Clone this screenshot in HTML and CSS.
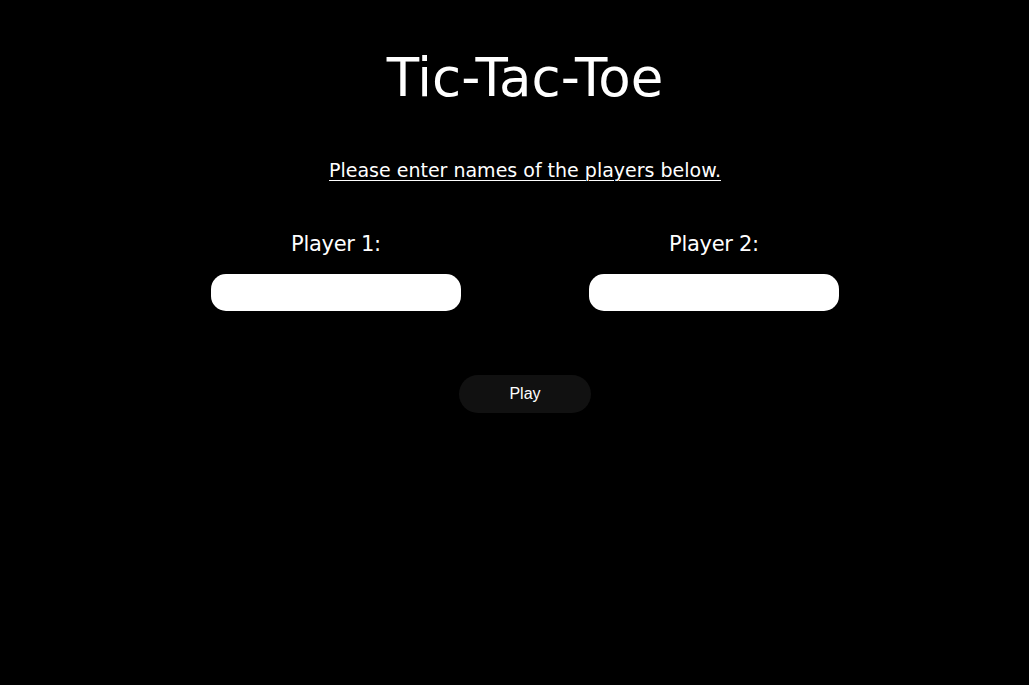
FILE: index.html
```html
<!DOCTYPE html>
<html lang="en">
<head>
<meta charset="utf-8">
<title>Tic-Tac-Toe</title>
<link rel="stylesheet" href="styles.css">
</head>
<body>
<main class="page">
  <h1 class="title">Tic-Tac-Toe</h1>
  <p class="intro">Please enter names of the players below.</p>
  <div class="players">
    <div class="player">
      <label class="player-label" for="p1">Player 1:</label>
      <input class="player-input" id="p1" type="text">
    </div>
    <div class="player">
      <label class="player-label" for="p2">Player 2:</label>
      <input class="player-input" id="p2" type="text">
    </div>
  </div>
  <button class="play-btn" type="button">Play</button>
</main>
</body>
</html>
```
FILE: styles.css
```css
html, body {
  margin: 0;
  padding: 0;
  background: #000;
  color: #fff;
  height: 100%;
}
body {
  font-family: "DejaVu Sans", "Open Sans", sans-serif;
}
.page {
  display: flex;
  flex-direction: column;
  align-items: center;
  padding-left: 21px;
  padding-top: 47px;
}
.title {
  margin: 0;
  font-size: 53px;
  font-weight: 400;
  line-height: 62px;
  letter-spacing: 0;
}
.intro {
  margin: 49px 0 0;
  font-size: 19px;
  line-height: 24px;
  text-decoration: underline;
  text-underline-offset: 3px;
  text-decoration-thickness: 1px;
}
.players {
  display: flex;
  gap: 128px;
  margin-top: 48px;
}
.player {
  display: flex;
  flex-direction: column;
  align-items: center;
  gap: 16px;
}
.player-label {
  font-size: 21px;
  line-height: 28px;
  letter-spacing: -0.3px;
}
.player-input {
  width: 250px;
  height: 37px;
  box-sizing: border-box;
  border: none;
  border-radius: 15px;
  background: #fff;
  padding: 0 14px;
  outline: none;
}
.play-btn {
  margin-top: 64px;
  width: 132px;
  height: 38px;
  border: none;
  border-radius: 19px;
  background: #111;
  color: #fff;
  font-family: "Liberation Sans", Arial, sans-serif;
  font-size: 16px;
}
```
